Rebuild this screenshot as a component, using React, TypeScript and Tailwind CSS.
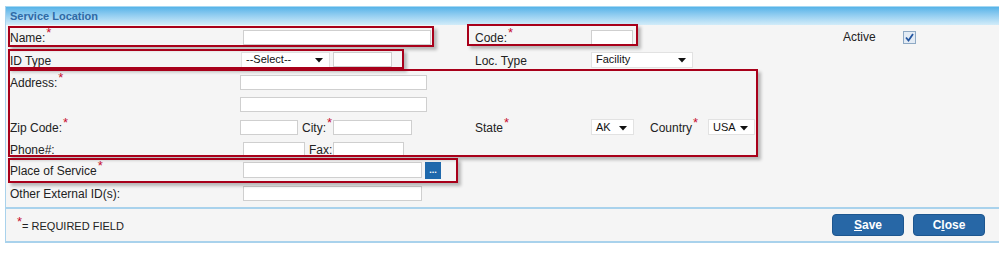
import React from 'react'

const font = { fontFamily: '"Liberation Sans", Arial, sans-serif' }

function Req() {
  return <span className="relative -top-[5px] ml-[1px] text-[13px] leading-none text-[#c8102e]">*</span>
}

function Label({ text, req }: { text: string; req?: boolean }) {
  return (
    <span className="text-[12px] leading-none text-[#222]">
      {text}
      {req && <Req />}
    </span>
  )
}

function Input({ w, h = 'h-[15px]' }: { w: string; h?: string }) {
  return <div className={`${w} ${h} bg-white border border-[#cfcfcf] shrink-0`} />
}

function Select({ w, value }: { w: string; value: string }) {
  return (
    <div className={`${w} h-[16px] bg-white border border-[#e2e2e2] flex items-center justify-between pl-[4px] pr-[6px] shrink-0`}>
      <span className="text-[11px] leading-none text-[#111]">{value}</span>
      <svg width="8" height="5" viewBox="0 0 8 5" className="mt-[2px]">
        <path d="M0 0H8L4 4.5Z" fill="#111" />
      </svg>
    </div>
  )
}

function RedBox({ cls }: { cls: string }) {
  return (
    <div
      className={`absolute border-2 border-[#a8001a] shadow-[3px_3px_3px_rgba(0,0,0,0.25)] pointer-events-none ${cls}`}
    />
  )
}

export default function App() {
  return (
    <div className="w-[999px] h-[257px] bg-white relative pt-[6px] pl-[5px]" style={font}>
      <div className="border-l border-[#a9d2ec] bg-[#f5f5f5]">
        {/* header */}
        <div className="h-[19px] border-t border-[#a6d8f3] bg-gradient-to-b from-[#55b3e8] to-[#d2ecf9] pl-[4px] flex items-center">
          <span className="text-[11px] font-bold text-[#2f6aa6] leading-none">Service Location</span>
        </div>

        <div className="pl-[4px] pb-[3px]">
          {/* name / code / active */}
          <div className="flex items-center h-[24px]">
            <div className="w-[230px]"><Label text="Name:" req /></div>
            <div className="w-[235px] pl-[3px]"><Input w="w-[188px]" /></div>
            <div className="w-[116px]"><Label text="Code:" req /></div>
            <div className="w-[252px]"><Input w="w-[42px]" /></div>
            <div className="flex items-center gap-[27px]">
              <Label text="Active" />
              <div className="w-[13px] h-[13px] border border-[#8ea9c4] bg-[#e3ebf4] flex items-center justify-center">
                <svg width="9" height="9" viewBox="0 0 9 9">
                  <path d="M1 4.5L3.5 7.5L8 1" stroke="#2456a0" strokeWidth="1.8" fill="none" />
                </svg>
              </div>
            </div>
          </div>

          {/* id type / loc type */}
          <div className="flex items-center h-[21px]">
            <div className="w-[230px]"><Label text="ID Type" /></div>
            <div className="w-[235px] pl-[1px] flex items-center gap-[3px]">
              <Select w="w-[89px]" value="--Select--" />
              <Input w="w-[59px]" />
            </div>
            <div className="w-[116px]"><Label text="Loc. Type" /></div>
            <div className="w-[252px]"><Select w="w-[102px]" value="Facility" /></div>
          </div>

          {/* address */}
          <div className="flex items-center h-[24px]">
            <div className="w-[230px]"><Label text="Address:" req /></div>
            <Input w="w-[187px]" />
          </div>
          <div className="flex items-center h-[20px]">
            <div className="w-[230px]" />
            <Input w="w-[187px]" />
          </div>

          {/* zip / city / state / country */}
          <div className="flex items-center h-[26px]">
            <div className="w-[230px]"><Label text="Zip Code:" req /></div>
            <div className="w-[235px] flex items-center">
              <Input w="w-[58px]" />
              <div className="w-[35px] pl-[4px]"><Label text="City:" req /></div>
              <Input w="w-[79px]" />
            </div>
            <div className="w-[116px]"><Label text="State" req /></div>
            <div className="flex items-center">
              <Select w="w-[43px]" value="AK" />
              <div className="w-[74px] pl-[16px]"><Label text="Country" req /></div>
              <Select w="w-[47px]" value="USA" />
            </div>
          </div>

          {/* phone / fax */}
          <div className="flex items-center h-[18px]">
            <div className="w-[230px]"><Label text="Phone#:" /></div>
            <div className="w-[235px] pl-[3px] flex items-center">
              <Input w="w-[62px]" />
              <div className="w-[28px] pl-[4px]"><Label text="Fax:" /></div>
              <Input w="w-[71px]" />
            </div>
          </div>

          {/* place of service */}
          <div className="flex items-center h-[24px]">
            <div className="w-[230px]"><Label text="Place of Service" req /></div>
            <div className="pl-[3px] flex items-center gap-[3px]">
              <Input w="w-[179px]" h="h-[16px]" />
              <div className="w-[16px] h-[17px] bg-[#1f69ac] flex items-end justify-center pb-[4px]">
                <span className="text-white text-[9px] leading-none font-bold">...</span>
              </div>
            </div>
          </div>

          {/* other ids */}
          <div className="flex items-center h-[22px]">
            <div className="w-[230px]"><Label text="Other External ID(s):" /></div>
            <div className="pl-[3px]"><Input w="w-[179px]" /></div>
          </div>
        </div>

        {/* footer */}
        <div className="border-t-2 border-b-2 border-[#a9d2ec] h-[36px] flex items-center justify-between pl-[11px] pr-[14px]">
          <span className="text-[11px] leading-none text-[#222]">
            <span className="relative -top-[4px] text-[13px] text-[#c8102e]">*</span>= REQUIRED FIELD
          </span>
          <div className="flex items-center gap-[9px]">
            <button className="w-[72px] h-[22px] rounded-[4px] bg-[#2767a6] border border-[#1d568f] text-white text-[12px] font-bold leading-none">
              <span className="underline">S</span>ave
            </button>
            <button className="w-[72px] h-[22px] rounded-[4px] bg-[#2767a6] border border-[#1d568f] text-white text-[12px] font-bold leading-none">
              C<span className="underline">l</span>ose
            </button>
          </div>
        </div>
      </div>

      {/* annotation boxes */}
      <RedBox cls="left-[8px] top-[26px] w-[426px] h-[21px]" />
      <RedBox cls="left-[467px] top-[24px] w-[171px] h-[22px]" />
      <RedBox cls="left-[8px] top-[49px] w-[396px] h-[20px]" />
      <RedBox cls="left-[8px] top-[69px] w-[750px] h-[88px]" />
      <RedBox cls="left-[8px] top-[158px] w-[450px] h-[25px]" />
    </div>
  )
}
